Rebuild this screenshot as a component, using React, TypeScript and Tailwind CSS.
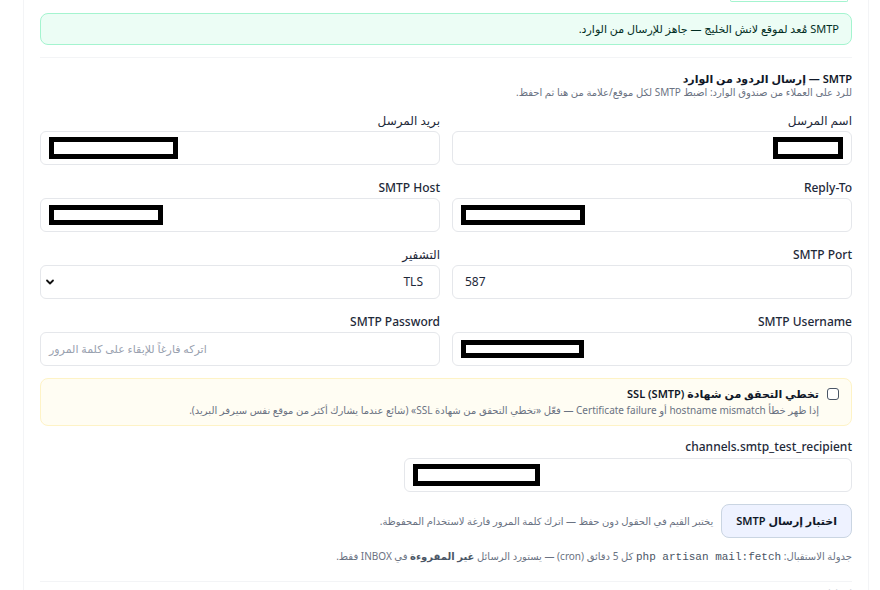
import React from 'react';

const font = { fontFamily: '"Segoe UI", "Noto Sans", "DejaVu Sans", sans-serif' };

const Redact: React.FC<{ w: number; h?: number }> = ({ w, h = 22 }) => (
  <span className="inline-block border-[5px] border-black bg-white" style={{ width: w, height: h }} />
);

interface FieldProps {
  label: string;
  children?: React.ReactNode;
  ltr?: boolean;
}

const Field: React.FC<FieldProps> = ({ label, children, ltr }) => (
  <div className="flex flex-col">
    <label className="h-4 text-xs font-medium leading-4 text-gray-800">{label}</label>
    <div
      dir={ltr ? 'ltr' : 'rtl'}
      className="mt-[2px] flex h-[34px] items-center rounded-md border border-gray-200 bg-white px-2 text-xs text-gray-800"
    >
      {children}
    </div>
  </div>
);

export default function App() {
  return (
    <div className="min-h-[590px] overflow-hidden bg-white text-gray-800" style={font}>
      <div dir="rtl" className="ml-[23px] mr-[11px] border-x border-gray-100 px-4">
        {/* bottom edge of the save button above */}
        <div className="ml-auto mr-1 h-[2px] w-[118px] rounded-b border-x border-b border-emerald-200" />

        <div className="mt-[11px] flex h-8 items-center rounded-lg border border-emerald-200 bg-emerald-50 px-3 text-[11px] text-emerald-950">
          SMTP مُعد لموقع لانش الخليج — جاهز للإرسال من الوارد.
        </div>

        <div className="mt-3 border-t border-gray-100" />

        <div className="mt-[14px]">
          <h3 className="text-[11px] font-semibold leading-[14px] text-gray-900">SMTP — إرسال الردود من الوارد</h3>
          <p className="text-[10px] leading-[13px] text-gray-500">
            للرد على العملاء من صندوق الوارد: اضبط SMTP لكل موقع/علامة من هنا ثم احفظ.
          </p>
        </div>

        <div className="mt-[14px] grid grid-cols-2 gap-x-3 gap-y-[15px]">
          <Field label="اسم المرسل">
            <Redact w={70} />
          </Field>
          <Field label="بريد المرسل" ltr>
            <Redact w={129} />
          </Field>
          <Field label="Reply-To" ltr>
            <Redact w={124} h={20} />
          </Field>
          <Field label="SMTP Host" ltr>
            <Redact w={114} h={20} />
          </Field>
          <Field label="SMTP Port" ltr>
            <span className="pl-1">587</span>
          </Field>
          <div className="flex flex-col">
            <label className="h-4 text-xs font-medium leading-4 text-gray-800">التشفير</label>
            <div className="mt-[2px] flex h-[34px] items-center justify-between rounded-md border border-gray-200 bg-white pl-[4px] pr-4 text-xs text-gray-800">
              <span>TLS</span>
              <svg width="10" height="10" viewBox="0 0 10 10" fill="none">
                <path d="M2 3.5l3 3 3-3" stroke="#111" strokeWidth="1.8" strokeLinecap="round" strokeLinejoin="round" />
              </svg>
            </div>
          </div>
          <Field label="SMTP Username" ltr>
            <Redact w={123} h={18} />
          </Field>
          <Field label="SMTP Password" ltr>
            <span dir="rtl" className="text-[11px] text-gray-400">اتركه فارغاً للإبقاء على كلمة المرور</span>
          </Field>
        </div>

        <div className="mt-3 flex h-12 items-start gap-2 rounded-lg border border-amber-100 bg-amber-50/60 px-3 pt-[8px]">
          <span className="mt-[1px] inline-block h-3 w-3 shrink-0 rounded-[3px] border border-gray-600 bg-white" />
          <div>
            <div className="text-[11px] font-semibold leading-[14px] text-gray-900">تخطي التحقق من شهادة SSL (SMTP)</div>
            <div className="mt-[2px] text-[10px] leading-[14px] text-gray-500">
              إذا ظهر خطأ hostname mismatch أو Certificate failure — فعّل «تخطي التحقق من شهادة SSL» (شائع عندما يشارك أكثر من موقع نفس سيرفر البريد).
            </div>
          </div>
        </div>

        <div className="mt-[13px] flex flex-col">
          <label className="h-4 text-xs font-medium leading-4 text-gray-800">channels.smtp_test_recipient</label>
          <div dir="ltr" className="ml-auto mt-[3px] flex h-[34px] w-[448px] items-center rounded-md border border-gray-200 bg-white px-2">
            <Redact w={127} />
          </div>
        </div>

        <div className="mt-3 flex items-center gap-2">
          <button className="h-[34px] rounded-lg border border-slate-300 bg-indigo-50 px-[14px] text-[11px] font-semibold text-gray-900">
            اختبار إرسال SMTP
          </button>
          <span className="text-[10px] text-gray-500">
            يختبر القيم في الحقول دون حفظ — اترك كلمة المرور فارغة لاستخدام المحفوظة.
          </span>
        </div>

        <p className="mt-[10px] text-[10px] leading-4 text-gray-500">
          جدولة الاستقبال:{' '}
          <code className="text-[11px] font-normal text-gray-600" style={{ fontFamily: '"Liberation Mono", monospace' }}>
            php artisan mail:fetch
          </code>{' '}
          كل 5 دقائق (cron) — يستورد الرسائل <strong className="font-semibold text-gray-600">غير المقروءة</strong> في INBOX فقط.
        </p>

        <div className="mt-4 border-t border-gray-100 pt-1 text-[10px] text-gray-300">إعدادات</div>
      </div>
    </div>
  );
}
